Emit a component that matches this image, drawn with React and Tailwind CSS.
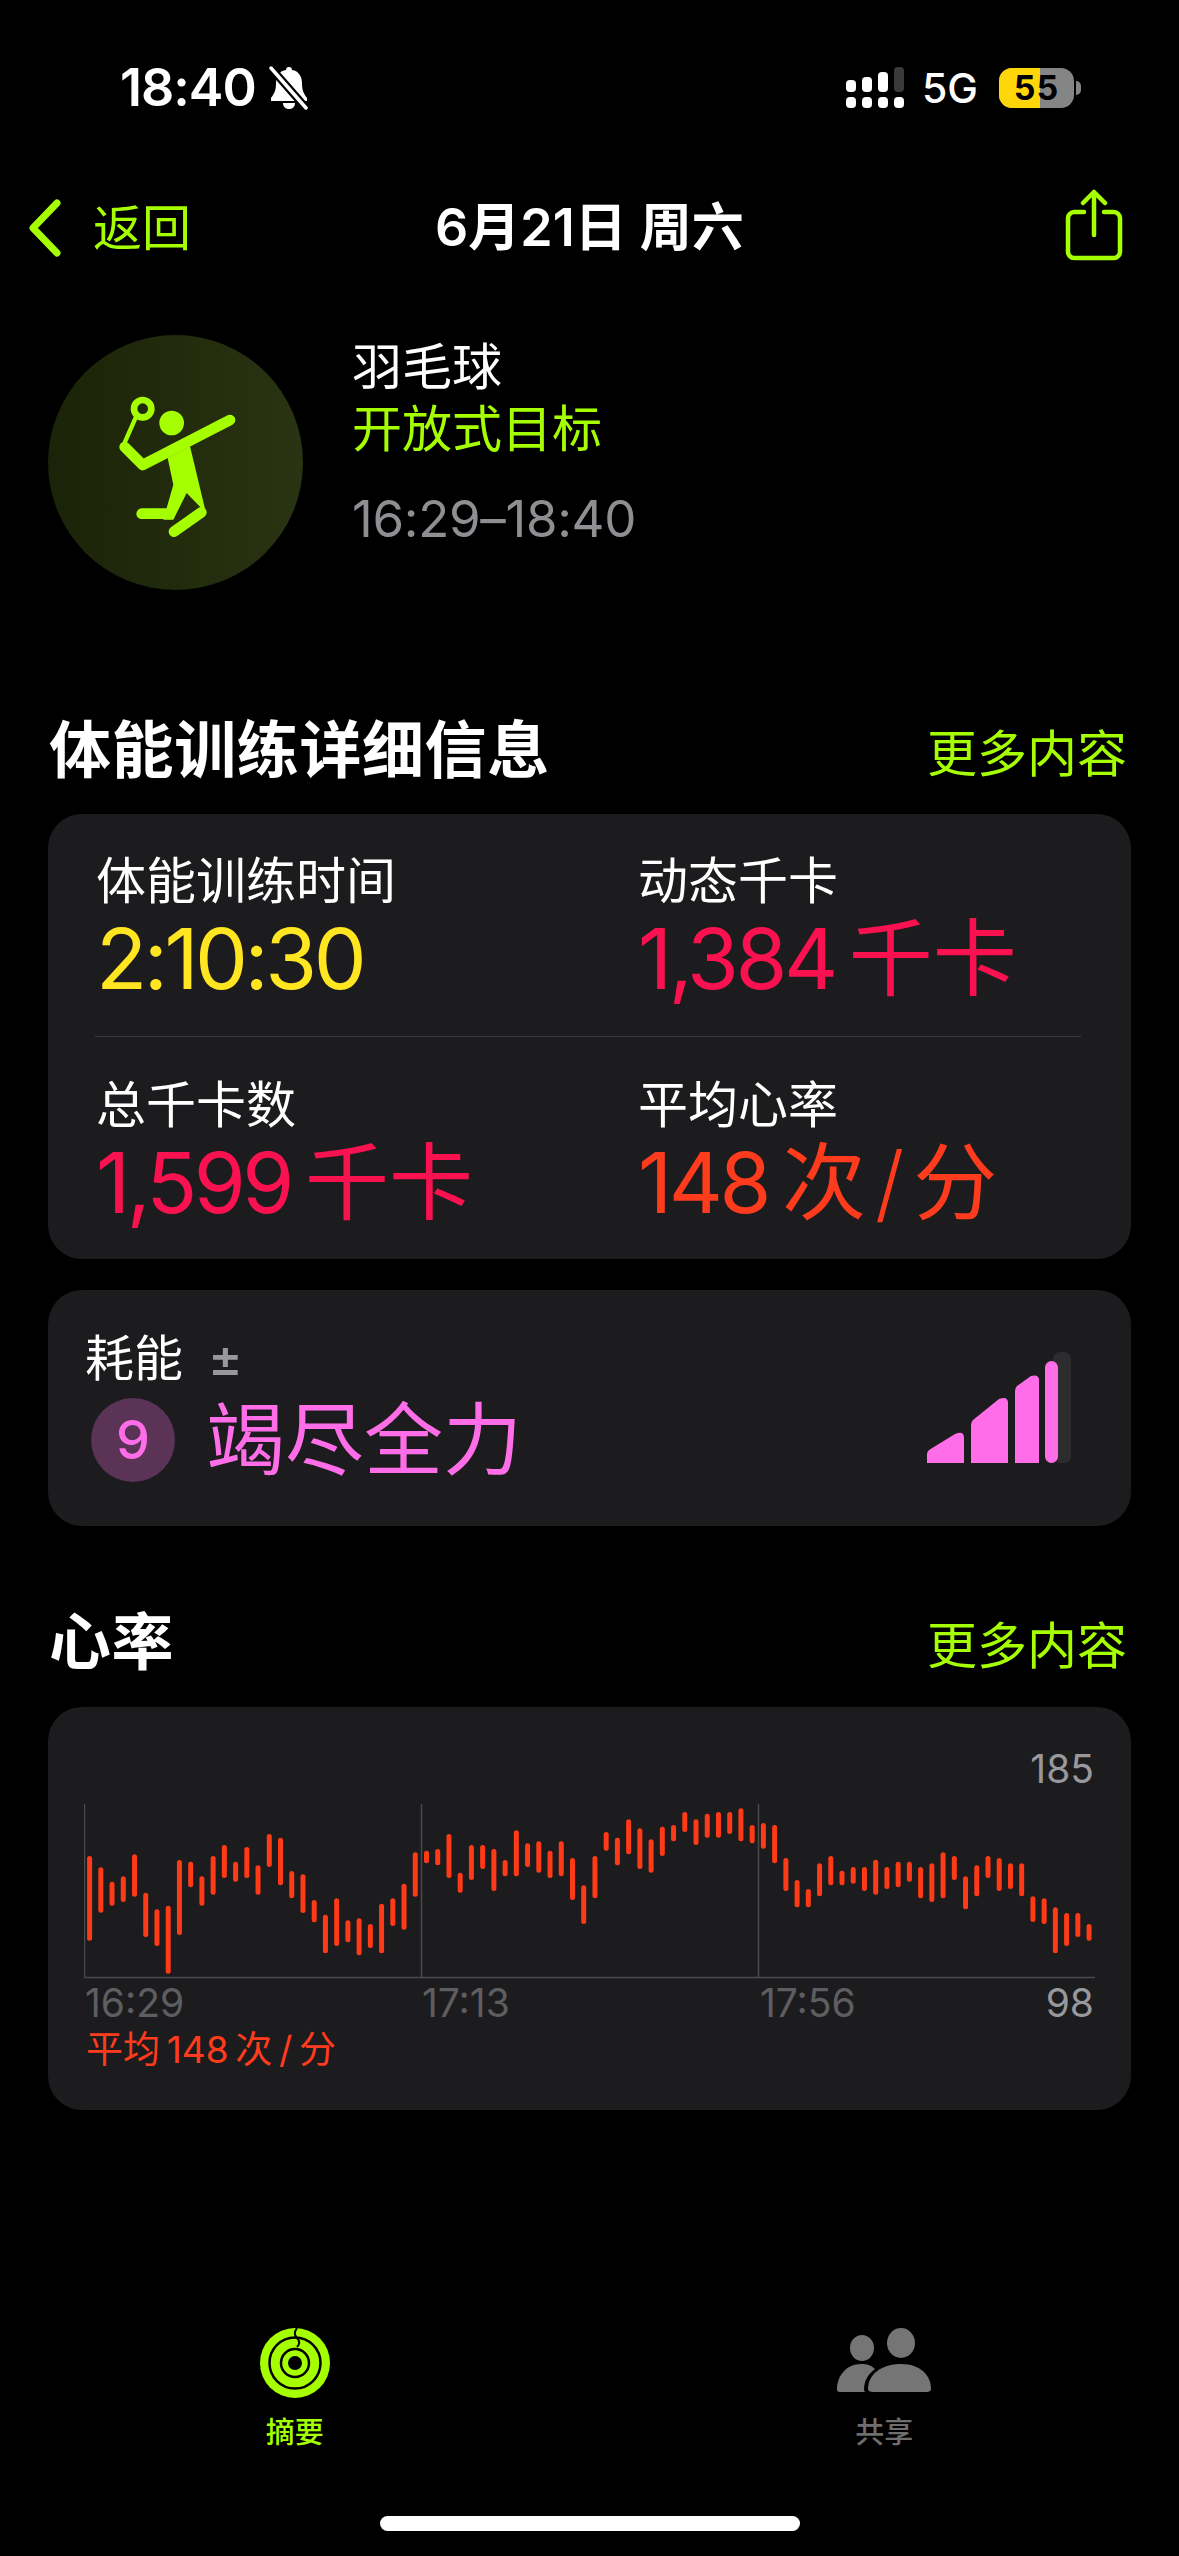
const LIME = "#a6ff00";

// bar tops and bottoms read off the chart, y measured from the top of the chart
const heartBars = [
  [468,722],[502,638],[545,617],[529,606],[463,590],[578,711],[628,738],[617,821],[480,705],[485,562],
  [529,617],[468,584],[435,534],[485,545],[441,534],[496,584],[402,501],[413,556],[513,595],[523,639],
  [600,667],[644,760],[595,738],[661,727],[655,766],[672,744],[611,760],[595,678],[551,689],[457,590],
  [452,490],[447,496],[402,534],[518,578],[435,540],[435,507],[447,573],[480,529],[391,529],[430,501],
  [424,518],[452,534],[424,529],[474,600],[556,672],[468,595],[396,452],[413,496],[358,463],[385,507],
  [418,518],[380,468],[375,424],[336,396],[358,435],[341,413],[336,413],[336,402],[325,424],[375,430],
  [369,446],[375,490],[474,573],[540,622],[567,622],[490,589],[468,556],[512,556],[501,551],[501,573],
  [479,584],[501,567],[485,562],[485,545],[501,595],[490,606],[457,595],[468,540],[529,628],[496,589],
  [468,534],[474,573],[490,567],[490,589],[589,666],[595,672],[622,760],[639,738],[639,711],[672,722],
];

function StatusBar() {
  return (
    <div className="h-[183px] pl-[120px] pr-[98px] pt-[62px] flex items-start justify-between text-white">
      <div className="flex items-center h-[52px]">
        <span className="text-[52px] leading-none font-semibold tracking-[-1px]">18:40</span>
        <svg width="42" height="44" viewBox="0 0 42 44" className="ml-[12px]">
          <path d="M21 1c2 0 3 1 3 3 7 1 10 7 10 13 0 8 2 11 5 15v3H3v-3c3-4 5-7 5-15 0-6 3-12 10-13 0-2 1-3 3-3z" fill="#fff" />
          <path d="M15 37h12c0 4-3 6-6 6s-6-2-6-6z" fill="#fff" />
          <path d="M3 2l35 40" stroke="#000" strokeWidth="8" />
          <path d="M3 2l35 40" stroke="#fff" strokeWidth="3.5" strokeLinecap="round" />
        </svg>
      </div>
      <div className="flex items-center h-[46px] mt-[3px]">
        <svg width="58" height="42" viewBox="0 0 58 42">
          <rect x="0" y="13" width="10" height="12" rx="4" fill="#fff" />
          <rect x="16" y="10" width="10" height="15" rx="4" fill="#fff" />
          <rect x="32" y="5" width="10" height="20" rx="4" fill="#fff" />
          <rect x="48" y="0" width="10" height="25" rx="4" fill="#3a3a3c" />
          <rect x="0" y="30" width="10" height="11" rx="4" fill="#fff" />
          <rect x="16" y="30" width="10" height="11" rx="4" fill="#fff" />
          <rect x="32" y="30" width="10" height="11" rx="4" fill="#fff" />
          <rect x="48" y="30" width="10" height="11" rx="4" fill="#fff" />
        </svg>
        <span className="ml-[18px] text-[41px] leading-none font-medium">5G</span>
        <div className="ml-[21px] relative w-[75px] h-[40px] rounded-[13px] overflow-hidden flex bg-[#858585]">
          <div className="w-[41px] bg-[#ffd60a]" />
          <span className="absolute inset-0 flex items-center justify-center text-[34px] font-bold text-black leading-none tracking-[1px]">55</span>
        </div>
        <div className="w-[5px] h-[14px] rounded-r-full bg-[#858585] ml-[2px]" />
      </div>
    </div>
  );
}

function NavBar() {
  return (
    <div className="h-[90px] relative flex items-center justify-between pl-[28px] pr-[56px]">
      <div className="flex items-center">
        <svg width="34" height="58" viewBox="0 0 34 58">
          <path d="M29 4L5 29l24 25" fill="none" stroke={LIME} strokeWidth="7" strokeLinecap="round" strokeLinejoin="round" />
        </svg>
        <span className="ml-[31px] text-[49px] leading-none" style={{ color: LIME }}>返回</span>
      </div>
      <div className="absolute inset-0 flex items-center justify-center text-white text-[52px] font-semibold leading-none">
        6月21日 周六
      </div>
      <svg width="58" height="72" viewBox="0 0 58 72" className="mt-[-6px]">
        <path d="M19 23H9c-3 0-6 3-6 6v34c0 3 3 6 6 6h40c3 0 6-3 6-6V29c0-3-3-6-6-6H39" fill="none" stroke={LIME} strokeWidth="4.5" strokeLinecap="round" />
        <path d="M29 46V3M18 14L29 3l11 11" fill="none" stroke={LIME} strokeWidth="4.5" strokeLinecap="round" strokeLinejoin="round" />
      </svg>
    </div>
  );
}

function BadmintonIcon() {
  return (
    <svg width="160" height="180" viewBox="0 0 480 540" className="ml-[8px]">
      <circle cx="128" cy="107" r="26" fill="none" stroke={LIME} strokeWidth="20" />
      <path d="M106 136L70 218" stroke={LIME} strokeWidth="13" strokeLinecap="round" />
      <circle cx="215" cy="150" r="37" fill={LIME} />
      <path d="M74 222l54 54L390 141" fill="none" stroke={LIME} strokeWidth="32" strokeLinecap="round" strokeLinejoin="round" />
      <path d="M203 255l67-35 48 200-58-60-40 80h-30l30-105z" fill={LIME} />
      <path d="M125 422h85" stroke={LIME} strokeWidth="32" strokeLinecap="round" />
      <path d="M222 476l82-58" stroke={LIME} strokeWidth="32" strokeLinecap="round" />
    </svg>
  );
}

function WorkoutHeader() {
  return (
    <div className="flex pl-[48px] h-[369px]">
      <div className="w-[255px] h-[255px] rounded-full bg-gradient-to-r from-[#1b2308] to-[#2a3312] flex items-center justify-center">
        <BadmintonIcon />
      </div>
      <div className="ml-[49px] flex flex-col">
        <div className="mt-[1px] h-[62px] flex items-center text-white text-[50px] leading-none">羽毛球</div>
        <div className="h-[62px] flex items-center text-[50px] leading-none" style={{ color: LIME }}>开放式目标</div>
        <div className="mt-[27px] h-[62px] flex items-center text-[#8e8e93] text-[51px] leading-none tracking-[-0.3px]">16:29–18:40</div>
      </div>
    </div>
  );
}

function SectionHeader({ title }) {
  return (
    <div className="h-[94px] pl-[49px] pr-[52px] flex items-center justify-between">
      <h2 className="text-white text-[62px] font-bold leading-none tracking-[0.6px]">{title}</h2>
      <span className="text-[50px] leading-none mt-[5px]" style={{ color: LIME }}>更多内容</span>
    </div>
  );
}

function Metric({ label, value, unit, color }) {
  return (
    <div className="flex-1">
      <div className="text-white text-[50px] leading-none h-[50px] flex items-center">{label}</div>
      <div className={`mt-[11px] h-[84px] flex items-center text-[84px] leading-none tracking-[-3.5px] ${color}`}>
        <span>{value}</span>
        {unit && <span className="ml-[14px] tracking-normal">{unit}</span>}
      </div>
    </div>
  );
}

function DetailsCard() {
  return (
    <div className="mx-[48px] h-[445px] rounded-[34px] bg-[#1c1c1e] pl-[48px] pr-[50px] pt-[42px]">
      <div className="flex">
        <div className="w-[542px]">
          <Metric label="体能训练时间" value="2:10:30" color="text-[#ffe620]" />
        </div>
        <Metric label="动态千卡" value="1,384" unit="千卡" color="text-[#fa114f]" />
      </div>
      <div className="h-px bg-[#3a3a3c] mt-[35px] mb-[43px] ml-[-1px]" />
      <div className="flex">
        <div className="w-[542px]">
          <Metric label="总千卡数" value="1,599" unit="千卡" color="text-[#fa114f]" />
        </div>
        <Metric
          label="平均心率"
          value="148"
          unit={<span className="flex items-center">次<span className="mx-[9px] font-light">/</span>分</span>}
          color="text-[#ff3b1d]"
        />
      </div>
    </div>
  );
}

function EffortCard() {
  return (
    <div className="mx-[48px] mt-[31px] h-[236px] rounded-[34px] bg-[#1c1c1e] pl-[37px] pr-[60px] pt-[43px] flex justify-between">
      <div>
        <div className="flex items-center h-[50px]">
          <span className="text-white text-[49px] leading-none">耗能</span>
          <span className="ml-[25px] text-[#98989d] text-[52px] leading-none font-medium">±</span>
        </div>
        <div className="flex items-center mt-[15px]">
          <div className="ml-[6px] w-[84px] h-[84px] rounded-full bg-[#5a3357] flex items-center justify-center text-[#ff6ee8] text-[54px] leading-none font-medium">9</div>
          <span className="ml-[31px] text-[#ff6ee8] text-[79px] leading-none">竭尽全力</span>
        </div>
      </div>
      <svg width="144" height="111" viewBox="0 0 144 111" className="mt-[19px]">
        <rect x="126" y="0" width="18" height="111" rx="7" fill="#2c2c2e" />
        <path d="M0 111v-9q0-2 2-4L28 82q9-4 9 4v25z" fill="#ff6ee8" />
        <path d="M44 111V73q0-3 2-5L72 47q9-3 9 4v60z" fill="#ff6ee8" />
        <path d="M88 111V39q0-3 2-5L104 24q8-2 8 4v83z" fill="#ff6ee8" />
        <rect x="118" y="9" width="13" height="102" rx="6.5" fill="#ff6ee8" />
      </svg>
    </div>
  );
}

function HeartChart() {
  return (
    <svg width="1012" height="175" viewBox="0 0 1012 175" className="block">
      <path d="M0.5 0v174M337.5 0v174M674.5 0v174" stroke="#4a4a4c" strokeWidth="1.5" fill="none" />
      <path d="M0 173.5h1011" stroke="#4a4a4c" strokeWidth="1.5" />
      {heartBars.map(([top, bottom], i) => (
        <rect
          key={i}
          x={3.1 + i * 11.23}
          y={top / 3 - 104}
          width="5"
          height={(bottom - top) / 3}
          rx="2.5"
          fill="#ff3a16"
        />
      ))}
    </svg>
  );
}

function HeartCard() {
  return (
    <div className="mx-[48px] h-[403px] rounded-[34px] bg-[#1c1c1e] pl-[36px] pr-[35px] pt-[41px]">
      <div className="h-[55px] text-right text-[#98989d] text-[39px] leading-none pr-[2px] mt-[1px]">185</div>
      <HeartChart />
      <div className="flex text-[39px] leading-none text-[#5e5e60] mt-[4px] pl-[1px]">
        <span className="w-[337px]">16:29</span>
        <span className="w-[338px]">17:13</span>
        <span className="flex-1">17:56</span>
        <span className="text-[#98989d] pr-[2px]">98</span>
      </div>
      <div className="mt-[9px] pl-[2px] text-[#ff3b1d] text-[37px] leading-none">{"平均\u2009148\u2009次\u2009/\u2009分"}</div>
    </div>
  );
}

function TabBar() {
  return (
    <div className="mt-[218px] grid grid-cols-2">
      <div className="flex flex-col items-center">
        <svg width="70" height="70" viewBox="0 0 70 70">
          <circle cx="35" cy="35" r="35" fill={LIME} />
          <circle cx="35" cy="35" r="25.5" fill="none" stroke="#000" strokeWidth="2.5" />
          <circle cx="35" cy="35" r="14" fill="none" stroke="#000" strokeWidth="2.5" />
          <circle cx="35" cy="35" r="7" fill="#000" />
          <path d="M37 0c-3 4-3 7 0 10 3 3 3 6 0 9" fill="none" stroke="#000" strokeWidth="2" />
        </svg>
        <span className="mt-[20px] text-[29px] leading-none font-medium" style={{ color: LIME }}>摘要</span>
      </div>
      <div className="flex flex-col items-center">
        <svg width="94" height="70" viewBox="0 0 94 70">
          <ellipse cx="25" cy="20" rx="12" ry="13" fill="#757575" />
          <ellipse cx="64" cy="15" rx="14" ry="15" fill="#757575" />
          <path d="M0 62c0-15 10-26 24-26 6 0 10 1 14 5-7 5-11 12-11 21l1 2H3c-2 0-3-1-3-2z" fill="#757575" />
          <path d="M36 64c-3 0-5-1-5-3 0-15 14-25 33-25s30 11 30 25c0 2-2 3-4 3z" fill="#757575" />
        </svg>
        <span className="mt-[20px] text-[29px] leading-none font-medium text-[#6e6e6e]">共享</span>
      </div>
    </div>
  );
}

export default function App() {
  return (
    <div className="w-[1179px] h-[2556px] bg-black overflow-hidden flex flex-col font-[Inter,'Noto_Sans_CJK_SC',sans-serif]">
      <StatusBar />
      <NavBar />
      <div className="h-[62px]" />
      <WorkoutHeader />
      <SectionHeader title="体能训练详细信息" />
      <div className="h-[16px]" />
      <DetailsCard />
      <EffortCard />
      <div className="h-[70px]" />
      <SectionHeader title="心率" />
      <div className="h-[17px]" />
      <HeartCard />
      <TabBar />
      <div className="mt-[69px] mx-auto w-[420px] h-[15px] rounded-full bg-white" />
    </div>
  );
}
